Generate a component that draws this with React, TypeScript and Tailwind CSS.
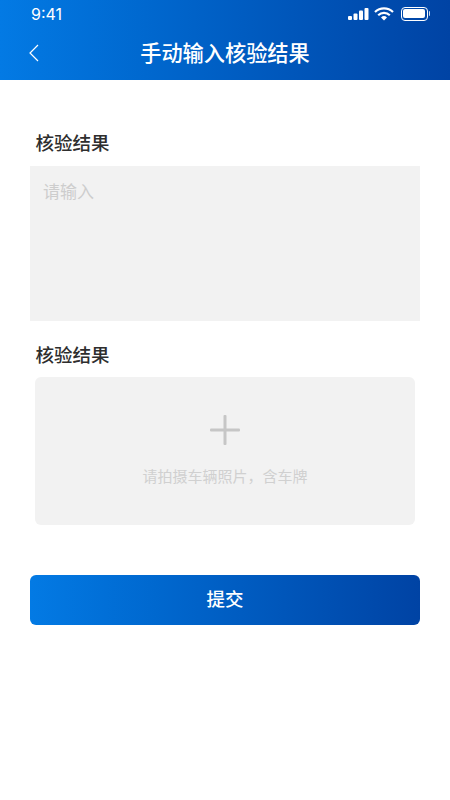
const cjk = "font-['Noto_Sans_CJK_SC','Noto_Sans',sans-serif]";

function StatusIcons() {
  return (
    <div className="flex items-center gap-[5px]">
      <svg width="22" height="14" viewBox="0 0 22 14" fill="white">
        <rect x="1" y="9" width="4" height="4" rx="1" />
        <rect x="6.5" y="6.5" width="4" height="6.5" rx="1" />
        <rect x="12" y="3.5" width="4" height="9.5" rx="1" />
        <rect x="17.5" y="1" width="4" height="12" rx="1" />
      </svg>
      <svg width="20" height="14" viewBox="0 0 20 14" fill="none" stroke="white" strokeWidth="2.2">
        <path d="M1 5a13 13 0 0 1 18 0" />
        <path d="M4.2 8.2a8.5 8.5 0 0 1 11.6 0" />
        <path d="M10 13.5l-3-3a4.4 4.4 0 0 1 6 0z" fill="white" stroke="none" />
      </svg>
      <div className="flex items-center ml-[2px]">
        <div className="w-[27px] h-[14px] rounded-[4px] border border-white p-[1.5px]">
          <div className="w-full h-full rounded-[2px] bg-white" />
        </div>
        <div className="w-[1.5px] h-[5px] bg-white/80 rounded-r-sm ml-[1px]" />
      </div>
    </div>
  );
}

function Label({ text }: { text: string }) {
  return <div className="text-[18.5px] leading-[26px] font-medium text-[#2e2e2e] pl-[5.5px] -translate-y-[1px]">{text}</div>;
}

export default function App() {
  return (
    <div className={`w-[450px] h-[800px] bg-white flex flex-col overflow-hidden ${cjk}`}>
      <header className="h-[80px] bg-gradient-to-r from-[#037ae4] to-[#0043a4] text-white shrink-0">
        <div className="h-[27px] flex items-center justify-between pl-[31px] pr-[20px]">
          <span className="text-[16px] font-['Inter',sans-serif]">9:41</span>
          <StatusIcons />
        </div>
        <div className="h-[53px] relative flex items-center justify-center pb-[3px]">
          <svg className="absolute left-[28px] top-[16px]" width="12" height="20" viewBox="0 0 12 20" fill="none" stroke="white" strokeWidth="1.2">
            <path d="M10 2L2 10l8 8" />
          </svg>
          <h1 className="text-[21.2px] font-medium">手动输入核验结果</h1>
        </div>
      </header>

      <main className="flex flex-col px-[30px] pt-[50px]">
        <Label text="核验结果" />
        <div className="mt-[10px] h-[155px] bg-[#f2f2f2] px-[13px] py-[12px] text-[17px] leading-[26px] text-[#cdcdcd]">
          请输入
        </div>
        <div className="mt-[21px]">
          <Label text="核验结果" />
        </div>
        <div className="mt-[9px] mx-[5px] h-[148px] rounded-[6px] bg-[#f2f2f2] flex flex-col items-center pt-[37px]">
          <svg width="32" height="32" viewBox="0 0 32 32" fill="#c6c6c6">
            <rect x="14.5" y="1" width="3" height="30" rx="1" />
            <rect x="1" y="14.5" width="30" height="3" rx="1" />
          </svg>
          <div className="mt-[19px] text-[15px] leading-[22px] text-[#d0d0d0]">请拍摄车辆照片，含车牌</div>
        </div>
        <button className="mt-[50px] h-[50px] pb-[2px] rounded-[6px] bg-gradient-to-r from-[#037ae4] to-[#0043a4] text-white text-[18.5px] font-medium">
          提交
        </button>
      </main>
    </div>
  );
}
